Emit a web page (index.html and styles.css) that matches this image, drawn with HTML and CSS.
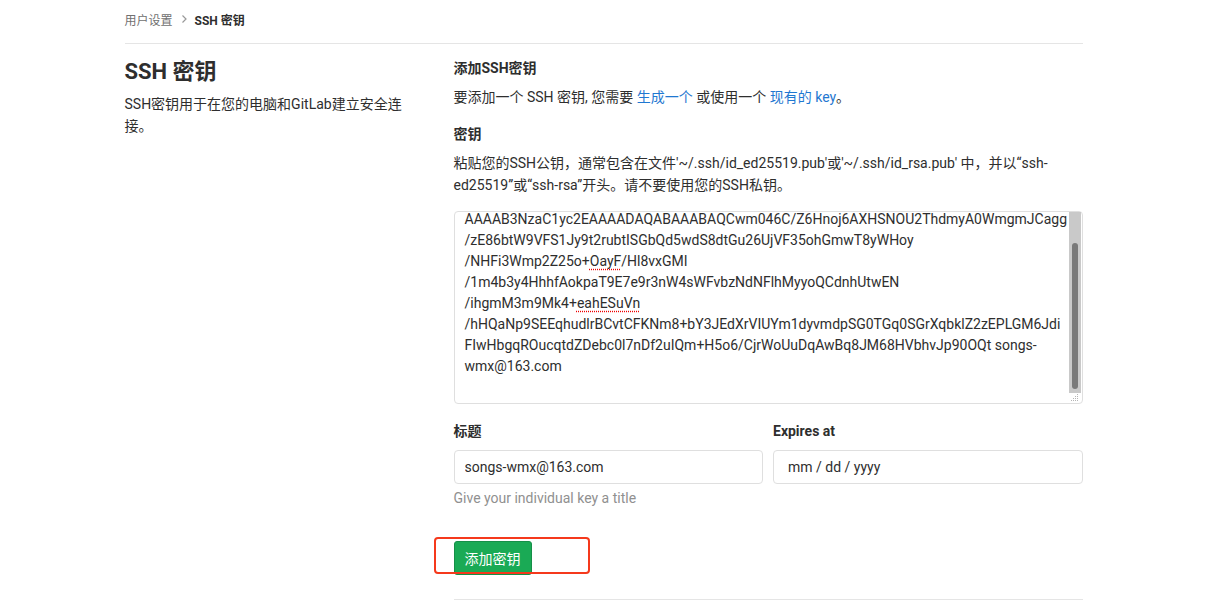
FILE: index.html
```html
<!DOCTYPE html>
<html lang="zh-CN">
<head>
    <meta charset="UTF-8">
    <meta name="viewport" content="width=device-width, initial-scale=1.0">
    <title>SSH 密钥 · 用户设置</title>
    <link rel="stylesheet" href="styles.css">
</head>
<body>
    <div class="page">
        <nav class="breadcrumbs">
            <a class="crumb" href="#">用户设置</a>
            <svg class="crumb-sep" width="8" height="10" viewBox="0 0 8 10"><path d="M2.5 1.5l3.5 3.5-3.5 3.5" fill="none" stroke="#999" stroke-width="1.2"/></svg>
            <span class="crumb-current">SSH 密钥</span>
        </nav>

        <div class="settings-row">
            <aside class="settings-side">
                <h4 class="side-title">SSH 密钥</h4>
                <p class="side-desc">SSH密钥用于在您的电脑和GitLab建立安全连接。</p>
            </aside>

            <section class="settings-main">
                <h5 class="form-label">添加SSH密钥</h5>
                <p class="form-text">要添加一个 SSH 密钥, 您需要 <a href="#">生成一个</a> 或使用一个 <a href="#">现有的 key</a>。</p>

                <h5 class="form-label label-key">密钥</h5>
                <p class="form-text">粘贴您的SSH公钥，通常包含在文件'~/.ssh/id_ed25519.pub'或'~/.ssh/id_rsa.pub' 中，并以“ssh-ed25519”或“ssh-rsa”开头。请不要使用您的SSH私钥。</p>

                <div class="key-box">
                    <div class="key-text" id="keyText">ssh-rsa
AAAAB3NzaC1yc2EAAAADAQABAAABAQCwm046C/Z6Hnoj6AXHSNOU2ThdmyA0WmgmJCagg
/zE86btW9VFS1Jy9t2rubtISGbQd5wdS8dtGu26UjVF35ohGmwT8yWHoy
/NHFi3Wmp2Z25o+<span class="typo">OayF</span>/Hl8vxGMI
/1m4b3y4HhhfAokpaT9E7e9r3nW4sWFvbzNdNFlhMyyoQCdnhUtwEN
/ihgmM3m9Mk4+<span class="typo">eahESuVn</span>
/hHQaNp9SEEqhudlrBCvtCFKNm8+bY3JEdXrVIUYm1dyvmdpSG0TGq0SGrXqbklZ2zEPLGM6Jdi
FIwHbgqROucqtdZDebc0l7nDf2uIQm+H5o6/CjrWoUuDqAwBq8JM68HVbhvJp90OQt songs-
wmx@163.com

</div>
                    <div class="key-scroll">
                        <div class="scroll-track"><div class="scroll-thumb"></div></div>
                        <svg class="resize-grip" width="11" height="10" viewBox="0 0 11 10">
                            <g fill="#b5b5b5">
                                <rect x="8" y="1" width="1" height="1"/>
                                <rect x="6" y="3" width="1" height="1"/><rect x="8" y="3" width="1" height="1"/>
                                <rect x="4" y="5" width="1" height="1"/><rect x="6" y="5" width="1" height="1"/><rect x="8" y="5" width="1" height="1"/>
                                <rect x="2" y="7" width="1" height="1"/><rect x="4" y="7" width="1" height="1"/><rect x="6" y="7" width="1" height="1"/><rect x="8" y="7" width="1" height="1"/>
                            </g>
                        </svg>
                    </div>
                </div>

                <div class="field-row">
                    <div class="field">
                        <label class="form-label" for="keyTitle">标题</label>
                        <input class="form-control" id="keyTitle" type="text" value="songs-wmx@163.com">
                        <p class="form-help">Give your individual key a title</p>
                    </div>
                    <div class="field">
                        <label class="form-label" for="keyExpires">Expires at</label>
                        <input class="form-control date-control" id="keyExpires" type="text" placeholder="mm / dd / yyyy">
                    </div>
                </div>

                <div class="form-actions">
                    <button class="btn-create" type="button">添加密钥</button>
                    <span class="mark-box"></span>
                </div>

                <hr class="form-end">
            </section>
        </div>
    </div>

    <script>
        // поле ключа прокручене вниз, як на скріні
        document.getElementById('keyText').scrollTop = 30;
    </script>
</body>
</html>
```

FILE: styles.css
```css
:root {
    --text-color: #2e2e2e;
    --muted-color: #707070;
    --link-color: #1f78d1;
    --border-color: #dfdfdf;
    --line-color: #e5e5e5;
    --green: #1aaa55;
    --green-dark: #168f48;
}

* {
    box-sizing: border-box;
}

html, body {
    margin: 0;
    overflow: hidden;
}

body {
    font-family: Roboto, "Noto Sans CJK SC", sans-serif;
    font-size: 14px;
    color: var(--text-color);
    background: #fff;
}

.page {
    width: 958px;
    margin: 0 auto;
}

/* хлібні крихти */
.breadcrumbs {
    display: flex;
    align-items: center;
    gap: 6px;
    height: 44px;
    padding-bottom: 5px;
    border-bottom: 1px solid var(--line-color);
    font-size: 12px;
}

.crumb {
    color: var(--muted-color);
    text-decoration: none;
}

.crumb-sep {
    margin: 0 1px;
}

.crumb-current {
    font-weight: bold;
    color: var(--text-color);
}

.settings-row {
    display: grid;
    grid-template-columns: 299px minmax(0, 1fr);
    column-gap: 30px;
}

.settings-side {
    padding-right: 14px;
}

.side-title {
    margin: 14px 0 0;
    font-size: 22px;
    line-height: 28px;
    font-weight: bold;
}

.side-desc {
    margin: 7px 0 0;
    line-height: 22px;
}

.form-label {
    display: block;
    margin: 14px 0 0;
    font-size: 14px;
    line-height: 20px;
    font-weight: bold;
}

.label-key {
    margin-top: 16px;
}

.form-text {
    margin: 8px 0 0;
    line-height: 22px;
}

.form-text a {
    color: var(--link-color);
    text-decoration: none;
}

/* поле ключа з намальованою смугою прокрутки */
.key-box {
    display: flex;
    height: 193px;
    margin-top: 15px;
    border: 1px solid var(--border-color);
    border-radius: 4px;
}

.key-text {
    flex: 1;
    min-width: 0;
    padding: 6px 10px;
    line-height: 21px;
    white-space: pre;
    overflow: hidden;
}

.typo {
    text-decoration: underline dotted #e00;
    text-underline-offset: 3px;
}

.key-scroll {
    display: flex;
    flex-direction: column;
    width: 12px;
    margin-right: 1px;
}

.scroll-track {
    flex: 1;
    display: flex;
    justify-content: center;
    background: #c9c9c9;
}

.scroll-thumb {
    width: 6px;
    height: 146px;
    margin-top: 31px;
    border-radius: 3px;
    background: #797979;
}

.resize-grip {
    display: block;
    flex: none;
}

.field-row {
    display: grid;
    grid-template-columns: 1fr 1fr;
    column-gap: 10px;
    margin-top: 3px;
}

.field .form-label {
    margin-top: 14px;
}

.form-control {
    display: block;
    width: 100%;
    height: 34px;
    margin-top: 9px;
    padding: 0 10px;
    border: 1px solid var(--border-color);
    border-radius: 4px;
    font-family: inherit;
    font-size: 14px;
    color: var(--text-color);
    outline: none;
}

.date-control {
    padding-left: 14px;
}

.date-control::placeholder {
    color: var(--text-color);
}

.form-help {
    margin: 4px 0 0;
    line-height: 20px;
    color: #909090;
}

.form-actions {
    position: relative;
    margin-top: 33px;
}

.btn-create {
    height: 34px;
    padding: 0 10px;
    border: 1px solid var(--green-dark);
    border-radius: 3px;
    background: var(--green);
    color: #fff;
    font-family: inherit;
    font-size: 14px;
}

/* червона рамка-виділення поверх кнопки */
.mark-box {
    position: absolute;
    left: -20px;
    top: -4px;
    width: 156px;
    height: 37px;
    border: 2px solid #f5391c;
    border-radius: 4px;
}

.form-end {
    margin: 24px 0 0;
    border: 0;
    border-top: 1px solid var(--line-color);
}
```
